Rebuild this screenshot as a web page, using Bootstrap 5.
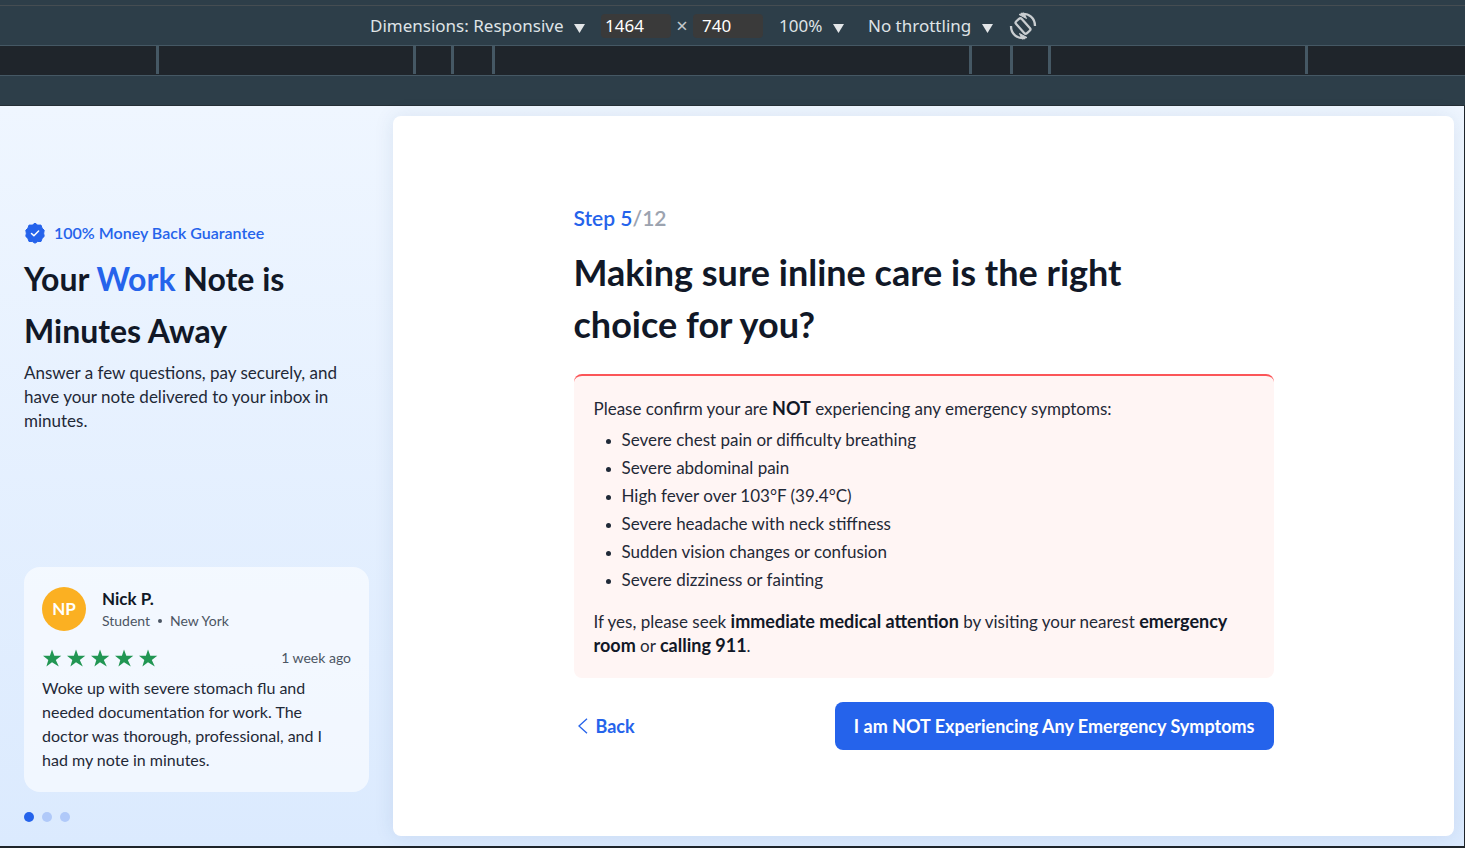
<!DOCTYPE html>
<html lang="en">
<head>
<meta charset="utf-8">
<meta name="viewport" content="width=device-width, initial-scale=1">
<title>Work Note</title>
<link href="https://cdn.jsdelivr.net/npm/bootstrap@5.3.0/dist/css/bootstrap.min.css" rel="stylesheet">
<style>
:root { --brand: #2563eb; --ink: #111827; --muted: #4b5563; --chrome: #2d3e49; --rule: #455864; }
body { font-family: Lato, "Open Sans", sans-serif; font-size: 17px; line-height: 24px; color: #1f2937; background: #1f252b; }
.brand-text { color: var(--brand); }

/* device toolbar */
.device-bar { font-family: "Noto Sans", sans-serif; font-size: 17px; color: #dfe3e6; background: var(--chrome); }
.bar-edge { height: 6px; border-bottom: 1px solid #454d52; }
.tools { height: 40px; border-bottom: 1px solid var(--rule); padding-right: 58px; }
.picker { appearance: none; border: 0; padding: 0 21px 0 0; color: inherit; line-height: 24px;
  background: transparent url("data:image/svg+xml,%3Csvg xmlns='http://www.w3.org/2000/svg' width='11' height='9'%3E%3Cpath d='M0 0h11L5.500 9z' fill='%23e3e6e8'/%3E%3C/svg%3E") no-repeat right 10px; }
.size-box { width: 70px; height: 24px; border: 0; border-radius: 4px; padding: 0 4px; color: #fff; background: #3a3a3a; }
.size-box.second { padding-left: 9px; }
.times { width: 22px; font-size: 20px; text-align: center; color: #c3c8cc; }
.ruler { height: 30px; background: #1f252b; border-bottom: 1px solid var(--rule); padding: 0 1px 1px 0; }
.ruler span { border-left: 3px solid var(--rule); }
.seg-a { width: 257px; } .seg-b { width: 38px; } .seg-c { width: 41px; } .seg-d { width: 477px; } .seg-end { width: 3px; }
.gutter { height: 30px; border-bottom: 1px solid #252f36; }

/* page */
.stage { background: linear-gradient(#eff6ff, #dbeafe); margin: 0 1px 2px 0; }
.side { width: 393px; padding: 0 24px 24px; }
.intro { padding-bottom: 20px; }
.side h1 { font-size: 32px; line-height: 52px; font-weight: 700; color: var(--ink); }
.guarantee { font-size: 16px; font-weight: 600; }
.review { background: rgba(255,255,255,.6); border-radius: 16px; padding: 20px 18px; }
.rating { margin: 17px 0 8px; }
.quote { font-size: 16px; }
.avatar { width: 44px; height: 44px; background: #fbb022; color: #fff; font-weight: 700; }
.person { font-size: 17px; line-height: 24px; font-weight: 700; color: var(--ink); }
.meta { font-size: 14px; line-height: 20px; color: var(--muted); }
.sep { width: 4px; height: 4px; background: var(--muted); }
.dot-btn { width: 10px; height: 10px; border: 0; padding: 0; background: #b0c9f9; }
.dot-btn.active { background: var(--brand); }
.panel { background: #fff; border-radius: 8px; box-shadow: 0 0 20px rgba(30,64,130,.1); margin: 10px 10px 10px 0; }
.question { width: 700px; max-width: 100%; }
.step { font-size: 21px; line-height: 32px; font-weight: 600; }
.step span { color: #9ca3af; }
.question h2 { font-size: 36px; line-height: 52px; font-weight: 700; color: var(--ink); padding-right: 100px; }
.warning { background: #fff5f4; border-top: 2px solid #fb5558; border-radius: 8px; padding: 21px 20px 20px; }
.warning strong { color: var(--ink); font-weight: 700; font-size: 18px; line-height: 18px; }
.warning ul { padding-left: 28px; margin-top: 5px; line-height: 28px; }
.warning li::marker { font-size: 14px; }
.btn-back, .btn-go { font-size: 18px; line-height: 24px; font-weight: 700; }
.btn-back { color: var(--brand); padding: 12px 4px; }
.btn-go { background: var(--brand); color: #fff; border-radius: 8px; padding: 11px 18px; }
.btn-go:hover { background: #1d4ed8; color: #fff; }
</style>
</head>
<body class="d-flex flex-column min-vh-100">
<header class="device-bar">
  <div class="bar-edge"></div>
  <div class="tools d-flex justify-content-center align-items-center">
    <select class="picker me-3" aria-label="Dimensions"><option>Dimensions: Responsive</option></select>
    <input class="size-box" aria-label="Width" value="1464">
    <span class="times">×</span>
    <input class="size-box second me-3" aria-label="Height" value="740">
    <select class="picker me-4" aria-label="Zoom"><option>100%</option></select>
    <select class="picker me-3" aria-label="Throttling"><option>No throttling</option></select>
    <button class="btn p-0 border-0 d-flex" aria-label="Rotate">
      <svg width="28" height="28" viewBox="0 0 28 28" fill="none" stroke="#c9cdd0" stroke-width="2.300">
        <rect x="10.200" y="6" width="7.600" height="16" rx="2" transform="rotate(-42 14 14)"/>
        <path d="M12 2c8-1 14 4 14 12M2 14c0 8 6 13 14 12"/>
        <path d="M10 2.500 15 1l2.500 5.500zM18 25.500 13 27l-2.500-5.500z" fill="#c9cdd0" stroke-width="1"/>
      </svg>
    </button>
  </div>
  <div class="ruler d-flex justify-content-center">
    <span class="seg-a"></span><span class="seg-b"></span><span class="seg-c"></span><span class="seg-d"></span><span class="seg-c"></span><span class="seg-b"></span><span class="seg-a"></span><span class="seg-end"></span>
  </div>
  <div class="gutter"></div>
</header>

<div class="stage d-flex flex-grow-1">
  <aside class="side d-flex flex-column flex-shrink-0">
    <div class="intro flex-grow-1 d-flex flex-column justify-content-center">
      <div class="guarantee brand-text d-flex align-items-center mb-2">
        <svg class="me-2" width="22" height="22" viewBox="0 0 22 22"><path d="M11 1.200 13.700 3.100 17 3.100 18.100 6.200 20.200 8.200 19.700 11.300 20.200 14.400 18.100 16.400 17 19.500 13.700 19.500 11 21.200 8.300 19.500 5 19.500 3.900 16.400 1.800 14.400 2.300 11.300 1.800 8.200 3.900 6.200 5 3.100 8.300 3.100z" fill="#2563eb" stroke="#2563eb" stroke-linejoin="round"/><path d="m7.500 11.500 2.400 2.300 4.700-4.800" fill="none" stroke="#fff" stroke-width="1.500" stroke-linecap="round" stroke-linejoin="round"/></svg>
        100% Money Back Guarantee
      </div>
      <h1 class="mb-1">Your <span class="brand-text">Work</span> Note is<br>Minutes Away</h1>
      <p class="mb-0">Answer a few questions, pay securely, and have your note delivered to your inbox in minutes.</p>
    </div>
    <section class="review">
      <div class="d-flex align-items-center">
        <div class="avatar rounded-circle d-flex align-items-center justify-content-center me-3">NP</div>
        <div><div class="person">Nick P.</div><div class="meta d-flex align-items-center gap-2">Student <span class="sep rounded-circle"></span> New York</div></div>
      </div>
      <div class="rating d-flex justify-content-between align-items-center">
        <svg width="120" height="20" viewBox="0 0 120 20" fill="#219653" role="img" aria-label="5 stars">
          <defs><path id="star" d="m10 1.500 2.300 6.200 7 .1-5.500 4.200 3 6.500-6.800-4.200-5.600 4.200 1.900-6.500L1 7.800l6.900-.1z"/></defs>
          <use href="#star"/><use href="#star" x="24"/><use href="#star" x="48"/><use href="#star" x="72"/><use href="#star" x="96"/>
        </svg>
        <span class="meta">1 week ago</span>
      </div>
      <p class="quote mb-0">Woke up with severe stomach flu and needed documentation for work. The doctor was thorough, professional, and I had my note in minutes.</p>
    </section>
    <div class="d-flex gap-2 pt-3 mt-1">
      <button class="dot-btn active rounded-circle" aria-label="Review 1"></button>
      <button class="dot-btn rounded-circle" aria-label="Review 2"></button>
      <button class="dot-btn rounded-circle" aria-label="Review 3"></button>
    </div>
  </aside>

  <main class="panel flex-grow-1 d-flex align-items-center justify-content-center">
    <div class="question">
      <div class="step brand-text mb-2 pb-1">Step 5<span>/12</span></div>
      <h2 class="mb-4">Making sure inline care is the right choice for you?</h2>
      <div class="warning mb-4">
        <p class="mb-0">Please confirm your are <strong>NOT</strong> experiencing any emergency symptoms:</p>
        <ul class="mb-3">
          <li>Severe chest pain or difficulty breathing</li>
          <li>Severe abdominal pain</li>
          <li>High fever over 103°F (39.4°C)</li>
          <li>Severe headache with neck stiffness</li>
          <li>Sudden vision changes or confusion</li>
          <li>Severe dizziness or fainting</li>
        </ul>
        <p class="mb-0">If yes, please seek <strong>immediate medical attention</strong> by visiting your nearest <strong>emergency room</strong> or <strong>calling 911</strong>.</p>
      </div>
      <div class="d-flex justify-content-between align-items-center">
        <button class="btn btn-back border-0 d-flex align-items-center">
          <svg class="me-2" width="10" height="16" viewBox="0 0 10 16" fill="none" stroke="currentColor" stroke-width="1.300"><path d="M9 .800 1 8l8 7.200"/></svg>Back
        </button>
        <button class="btn btn-go">I am NOT Experiencing Any Emergency Symptoms</button>
      </div>
    </div>
  </main>
</div>
<script src="https://cdn.jsdelivr.net/npm/bootstrap@5.3.0/dist/js/bootstrap.bundle.min.js"></script>
</body>
</html>
